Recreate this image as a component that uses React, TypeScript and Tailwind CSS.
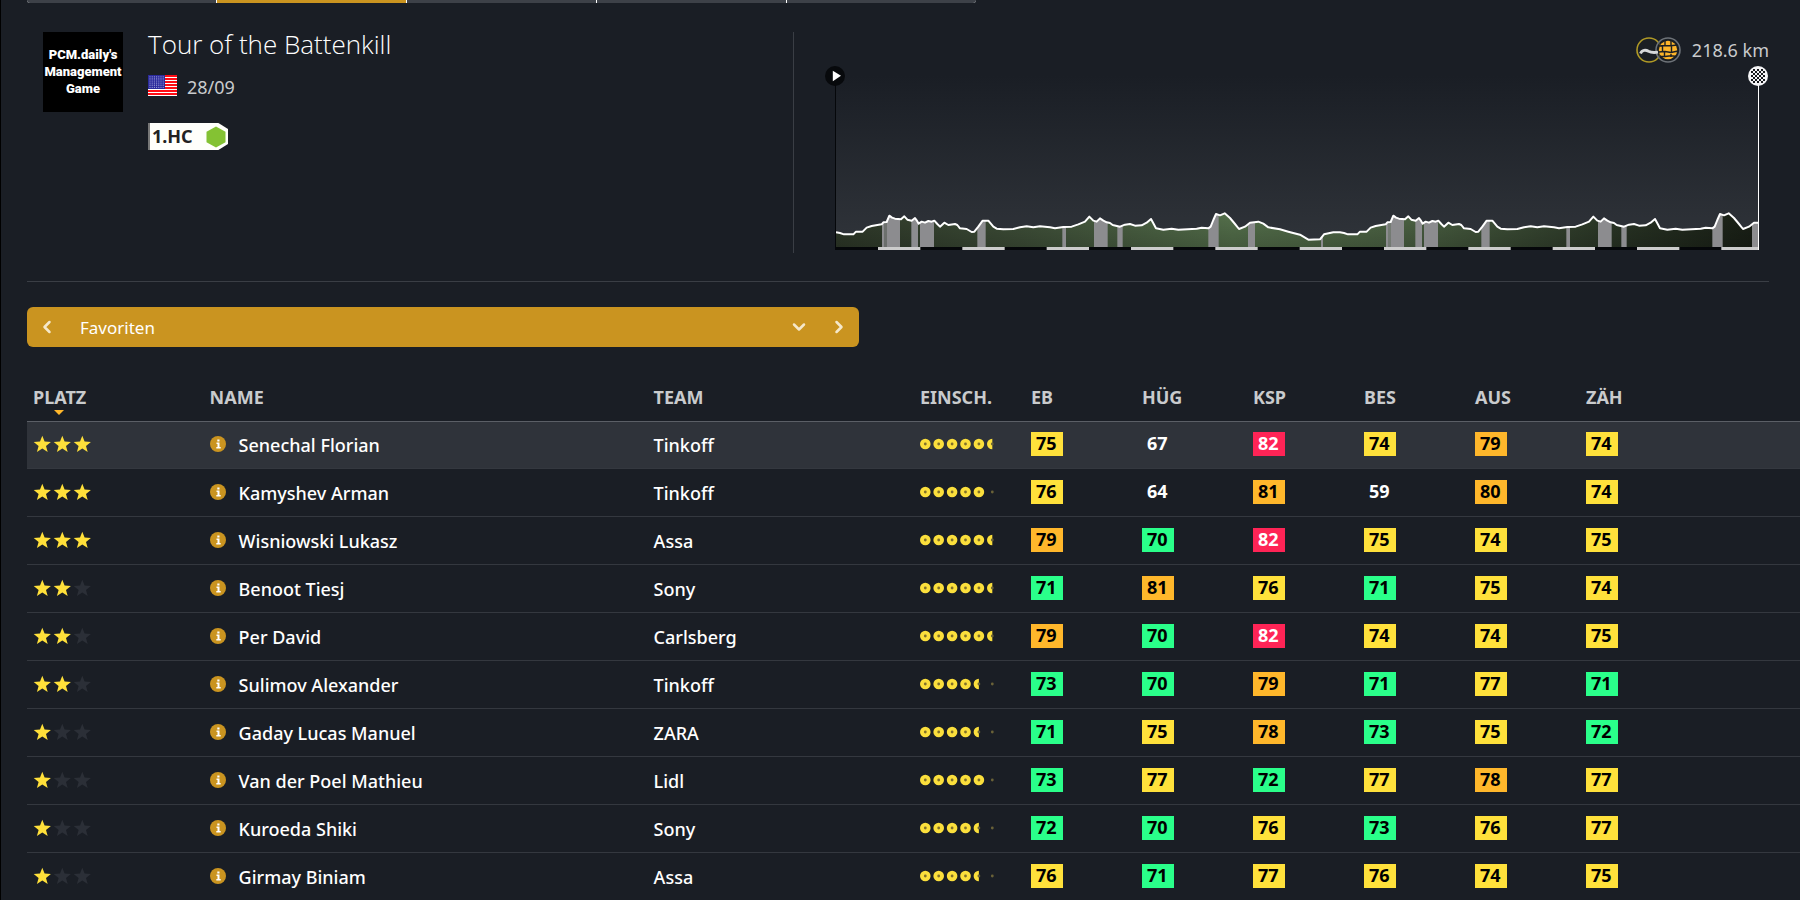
import { useState } from 'react';
import { ChevronDown, ChevronLeft, ChevronRight } from 'lucide-react';

interface Rider {
    stars: number;
    name: string;
    team: string;
    coins: number;
    skills: number[];
}

const riders: Rider[] = [
    { stars: 3, name: 'Senechal Florian', team: 'Tinkoff', coins: 5.5, skills: [75, 67, 82, 74, 79, 74] },
    { stars: 3, name: 'Kamyshev Arman', team: 'Tinkoff', coins: 5, skills: [76, 64, 81, 59, 80, 74] },
    { stars: 3, name: 'Wisniowski Lukasz', team: 'Assa', coins: 5.5, skills: [79, 70, 82, 75, 74, 75] },
    { stars: 2, name: 'Benoot Tiesj', team: 'Sony', coins: 5.5, skills: [71, 81, 76, 71, 75, 74] },
    { stars: 2, name: 'Per David', team: 'Carlsberg', coins: 5.5, skills: [79, 70, 82, 74, 74, 75] },
    { stars: 2, name: 'Sulimov Alexander', team: 'Tinkoff', coins: 4.5, skills: [73, 70, 79, 71, 77, 71] },
    { stars: 1, name: 'Gaday Lucas Manuel', team: 'ZARA', coins: 4.5, skills: [71, 75, 78, 73, 75, 72] },
    { stars: 1, name: 'Van der Poel Mathieu', team: 'Lidl', coins: 5, skills: [73, 77, 72, 77, 78, 77] },
    { stars: 1, name: 'Kuroeda Shiki', team: 'Sony', coins: 4.5, skills: [72, 70, 76, 73, 76, 77] },
    { stars: 1, name: 'Girmay Biniam', team: 'Assa', coins: 4.5, skills: [76, 71, 77, 76, 74, 75] },
];

const skillNames = ['EB', 'HÜG', 'KSP', 'BES', 'AUS', 'ZÄH'];

// Height points of one lap, the lap is ridden almost twice
const LAP = 1512;
const lap: [number, number][] = [
    [3, 469], [15, 471], [27, 475], [55, 475], [63, 467], [83, 467], [95, 455], [110, 450], [140, 445],
    [145, 439], [155, 438], [163, 419], [171, 425], [180, 428], [198, 430], [208, 421], [217, 431], [230, 434],
    [240, 426], [245, 433], [251, 443], [260, 437], [270, 440], [280, 435], [290, 437], [298, 434], [307, 444],
    [315, 452], [328, 440], [340, 447], [360, 444], [367, 447], [375, 457], [395, 459], [410, 468], [418, 467],
    [430, 452], [443, 434], [460, 434], [475, 452], [485, 458], [505, 460], [535, 459], [555, 454], [575, 451],
    [595, 454], [615, 451], [645, 454], [660, 457], [685, 453], [710, 452], [730, 445], [750, 437], [763, 422],
    [775, 434], [785, 437], [795, 427], [805, 434], [815, 439], [825, 441], [833, 447], [855, 452], [870, 446],
    [885, 444], [900, 449], [920, 448], [935, 440], [948, 429], [955, 442], [963, 457], [985, 461], [1010, 458],
    [1030, 461], [1085, 458], [1100, 455], [1120, 457], [1127, 452], [1135, 432], [1143, 414], [1155, 418],
    [1169, 412], [1185, 426], [1200, 444], [1212, 459], [1230, 452], [1245, 440], [1270, 437], [1285, 443],
    [1300, 454], [1335, 460], [1360, 467], [1395, 476], [1420, 491], [1455, 490], [1467, 475], [1495, 469],
];
const points = [...lap, ...lap.map(([x, y]) => [x + LAP, y])].filter(([x]) => x < 2762);
const outline = points.map(([x, y]) => `${x},${y}`).join(' ') + ' 2769,440';

const cobbles: [number, number][] = [
    [141, 8], [151, 4], [156, 39], [229, 20], [255, 42], [427, 25], [682, 11], [777, 41], [847, 16],
    [1120, 31], [1239, 21], [1458, 6],
];
const sectors = [...cobbles, ...cobbles.map(([x, w]) => [x + LAP, w])].filter(([x]) => x < 2760);

function StageProfile() {
    return (
        <svg viewBox="0 0 2772 522" preserveAspectRatio="none" className="block h-[174px] w-full">
            <defs>
                <linearGradient id="sky" x1="0" y1="0" x2="0" y2="1">
                    <stop offset="0" stopColor="#1a1e25" />
                    <stop offset="1" stopColor="#30343a" />
                </linearGradient>
                <linearGradient id="hills" x1="0" y1="0" x2="1" y2="0">
                    <stop offset="0" stopColor="#2d3728" />
                    <stop offset="0.2" stopColor="#3d4d37" />
                    <stop offset="0.43" stopColor="#536e4a" />
                    <stop offset="0.62" stopColor="#4a6042" />
                    <stop offset="0.85" stopColor="#283324" />
                    <stop offset="1" stopColor="#181e15" />
                </linearGradient>
                <linearGradient id="shade" x1="0" y1="0" x2="0" y2="1">
                    <stop offset="0.8" stopColor="#000000" stopOpacity="0" />
                    <stop offset="1" stopColor="#000000" stopOpacity="0.2" />
                </linearGradient>
                <clipPath id="ground">
                    <polygon points={`3,513 ${outline} 2769,513`} />
                </clipPath>
            </defs>
            <rect width="2772" height="522" fill="url(#sky)" />
            <g clipPath="url(#ground)">
                <rect width="2772" height="522" fill="url(#hills)" />
                <rect width="2772" height="522" fill="url(#shade)" />
                {sectors.map(([x, w]) => (
                    <rect key={x} x={x} y="380" width={w} height="140" fill="#8c8c8f" />
                ))}
            </g>
            <polyline points={outline} fill="none" stroke="#ffffff" strokeWidth="6" strokeLinejoin="round" />
            <rect y="513" width="2772" height="9" fill="#05070a" />
            {Array.from({ length: 11 }, (_, i) => (
                <rect key={i} x={129 + i * 253} y="513" width="127" height="9" fill="#cccccc" />
            ))}
            <rect width="3" height="522" fill="#05070a" />
            <rect x="2769" width="3" height="522" fill="#ffffff" />
        </svg>
    );
}

function Flag() {
    return (
        <svg viewBox="0 0 29 21" className="h-[21px] w-[29px]" role="img" aria-label="USA">
            <rect width="29" height="21" fill="#ffffff" />
            {[0, 3, 6, 9, 12, 15, 18].map((y) => (
                <rect key={y} y={y} width="29" height="2" fill="#ff0c14" />
            ))}
            <rect width="17" height="14" fill="#2a2a9c" />
            {[0, 1, 2, 3, 4, 5].map((row) =>
                [0, 1, 2, 3, 4, 5, 6].map((col) => (
                    <circle key={`${row}-${col}`} cx={2 + col * 2.2} cy={1.8 + row * 2.1} r="0.6" fill="#a9a9dd" />
                ))
            )}
        </svg>
    );
}

function TerrainIcons() {
    return (
        <svg viewBox="0 0 46 26" className="h-[26px] w-[46px]" aria-hidden="true">
            <circle cx="13" cy="13" r="12" fill="#1b1f24" stroke="#b09a26" strokeWidth="1.6" />
            <circle cx="32" cy="13" r="12" fill="#1b1f24" fillOpacity="0.7" stroke="#6d7278" strokeWidth="1.6" />
            <path d="M4.5 16.5C6 12.5 10 12.8 12.5 14.3 15.5 16 18 15.8 22 15.2" fill="none" stroke="#d6d8da" strokeWidth="2.8" />
            <circle cx="32" cy="13" r="9.2" fill="#fdb52a" />
            <path
                d="M29 3v5.5M35 3v5M23 9l6-.5 6 .3 6-.8M22.5 15l6.5-.5 6 1 7-1.5M28.5 14.5v5M35.5 8.500v6.500M35 17v3M24 19.500h5l6-.8 6 .8M26.500 9v5.500"
                fill="none"
                stroke="#1b1f24"
                strokeWidth="1.4"
            />
        </svg>
    );
}

function StartIcon() {
    return (
        <svg viewBox="0 0 20 20" className="size-5" aria-hidden="true">
            <circle cx="10" cy="10" r="10" fill="#07090c" />
            <path d="M7.8 4.8l8.2 5-8.2 5.4z" fill="#ffffff" />
        </svg>
    );
}

function FinishIcon() {
    return (
        <svg viewBox="0 0 20 20" className="size-5" aria-hidden="true">
            <circle cx="10" cy="10" r="10" fill="#f4f4f6" />
            {[0, 1, 2, 3, 4, 5, 6].map((row) =>
                [0, 1, 2, 3, 4, 5, 6].map((col) =>
                    (row + col) % 2 === 1 && Math.hypot(row - 3, col - 3) < 3.7 ? (
                        <rect key={`${row}-${col}`} x={3 + col * 2} y={3 + row * 2} width="2" height="2" fill="#17191d" />
                    ) : null
                )
            )}
        </svg>
    );
}

function Stars({ count }: { count: number }) {
    return (
        <svg viewBox="0 0 59 18" className="block h-[18px] w-[59px]" role="img" aria-label={`${count} / 3`}>
            {[0, 1, 2].map((i) => (
                <path
                    key={i}
                    transform={`translate(${i * 20 + 1} 0)`}
                    d="M9.3.8l2.3 5.800 6.300.3-4.900 4 1.700 6.200-5.400-3.500-5.400 3.500 1.700-6.200-4.900-4 6.300-.3z"
                    fill={i < count ? '#ffe03a' : '#2b2f37'}
                />
            ))}
        </svg>
    );
}

function Coins({ count }: { count: number }) {
    return (
        <svg viewBox="0 0 76 12" className="block h-3 w-[76px]" role="img" aria-label={`${count} / 6`}>
            {[0, 1, 2, 3, 4, 5].map((i) => {
                const cx = 5.3 + i * 13.4;
                const full = count >= i + 1;
                return (
                    <g key={i}>
                        {full && <circle cx={cx} cy="6" r="5.3" fill="#fbdf3c" />}
                        {!full && count > i && <path d={`M${cx} 0.7a5.3 5.3 0 0 0 0 10.6z`} fill="#fbdf3c" />}
                        <circle cx={cx} cy="6" r="1.4" fill={full ? '#80702a' : '#6a6238'} />
                    </g>
                );
            })}
        </svg>
    );
}

function InfoIcon() {
    return (
        <svg viewBox="0 0 16 16" className="block size-4" aria-hidden="true">
            <circle cx="8" cy="8" r="8" fill="#ca9420" />
            <path d="M7.300 3.600h2.200v2h-2.200zM6.500 6.600h3v4.400h1.200v1.500H6.300V11h1.200V8.100h-1z" fill="#ffffff" />
        </svg>
    );
}

function skillColor(value: number) {
    if (value >= 82) return 'bg-[#ff2456] text-white';
    if (value >= 78) return 'bg-[#ffb72b] text-black';
    if (value >= 74) return 'bg-[#ffe13b] text-black';
    if (value >= 70) return 'bg-[#2aff8a] text-black';
    return 'text-white';
}

function RaceHeader() {
    return (
        <header className="mr-[31px] flex border-b border-[#3a3e45] pt-[29px] pb-[28px]">
            <div className="flex h-[221px] w-[767px] shrink-0 border-r border-[#3a3e45] pl-[16px]">
                <div className="flex size-20 flex-col items-center justify-center bg-black pb-[2px] font-[Roboto,sans-serif] text-[13px] leading-[17px] font-black text-white">
                    <span>PCM.daily's</span>
                    <span>Management</span>
                    <span>Game</span>
                </div>
                <div className="pl-[25px]">
                    <h1 className="font-['Open_Sans',sans-serif] text-[26px] leading-6 font-light text-white">Tour of the Battenkill</h1>
                    <div className="mt-[17px] flex h-6 items-center gap-[10px]">
                        <Flag />
                        <span className="pt-[5px] text-[18px] text-[#c9cbcd]">28/09</span>
                    </div>
                    <div className="mt-[26px] flex h-[27px] w-20 items-center justify-between border-l-2 border-[#777777] bg-[#fffffb] pr-[2px] pl-[2px] [clip-path:polygon(0_0,88%_0,100%_22%,100%_78%,88%_100%,0_100%)]">
                        <span className="text-[18px] font-bold text-[#222222]">1.HC</span>
                        <svg viewBox="0 0 20 22" className="h-[22px] w-5" aria-hidden="true">
                            <path d="M10 .5l9.500 5.300v10.400L10 21.500.500 16.200V5.800z" fill="#84c233" />
                        </svg>
                    </div>
                </div>
            </div>
            <div className="min-w-0 flex-1 pl-[31px]">
                <div className="flex h-[36px] items-center justify-end gap-[10px]">
                    <TerrainIcons />
                    <span className="text-[18px] text-[#c9cbcd]">218.6 km</span>
                </div>
                <div className="relative z-10 -mt-[2px] flex justify-between pr-px">
                    <StartIcon />
                    <FinishIcon />
                </div>
                <div className="-mt-[10px] pr-[10px] pl-[10px]">
                    <StageProfile />
                </div>
            </div>
        </header>
    );
}

function ViewPicker() {
    const [view, setView] = useState('Favoriten');

    return (
        <div className="mt-[25px] flex h-10 w-[832px] items-center rounded-md bg-[#ca9420] text-[#f5e8cb]">
            <button type="button" aria-label="Zurück" className="flex h-10 w-10 items-center justify-center">
                <ChevronLeft size={20} strokeWidth={3} />
            </button>
            <div className="relative flex-1">
                <select
                    aria-label="Ansicht"
                    value={view}
                    onChange={(e) => setView(e.target.value)}
                    className="block h-10 w-full appearance-none pt-[2px] pl-[13px] text-[17px] text-white focus:outline-none"
                >
                    <option>Favoriten</option>
                </select>
                <ChevronDown size={20} strokeWidth={3} className="pointer-events-none absolute top-[10px] right-[10px]" />
            </div>
            <button type="button" aria-label="Weiter" className="flex h-10 w-10 items-center justify-center">
                <ChevronRight size={20} strokeWidth={3} />
            </button>
        </div>
    );
}

function RiderTable() {
    return (
        <div className="mt-[25px] -mr-[3px]">
            <table className="w-full table-fixed border-separate border-spacing-0 text-left text-[18px]">
                <colgroup>
                    <col className="w-[10%]" />
                    <col className="w-[25%]" />
                    <col className="w-[15%]" />
                    <col span={8} className="w-[6.25%]" />
                </colgroup>
                <thead>
                    <tr className="h-[50px] text-[#c9cbcd] [&>th]:border-b [&>th]:border-[#5b5f66] [&>th]:px-[5px] [&>th]:pt-[2px] [&>th]:font-bold">
                        <th>
                            <span className="relative ml-px">
                                PLATZ
                                <svg viewBox="0 0 10 5" className="absolute top-[25px] left-[21px] h-[5px] w-[10px]" aria-hidden="true">
                                    <path d="M0 0h10L5 5z" fill="#ffb72b" />
                                </svg>
                            </span>
                        </th>
                        <th>NAME</th>
                        <th>TEAM</th>
                        <th>EINSCH.</th>
                        {skillNames.map((skill) => (
                            <th key={skill}>{skill}</th>
                        ))}
                        <th aria-label="Mehr" />
                    </tr>
                </thead>
                <tbody>
                    {riders.map((rider) => (
                        <tr
                            key={rider.name}
                            className="h-12 text-white first:h-[47px] first:bg-[#2f333a] [&>td]:border-b [&>td]:border-[#34383f] [&>td]:px-[5px] last:[&>td]:border-b-0"
                        >
                            <td className="pb-[2px]">
                                <Stars count={rider.stars} />
                            </td>
                            <td className="pt-px">
                                <a href="#" className="flex items-center gap-[13px] font-medium">
                                    <span className="pb-[3px]">
                                        <InfoIcon />
                                    </span>
                                    <span>{rider.name}</span>
                                </a>
                            </td>
                            <td className="pt-px font-medium">{rider.team}</td>
                            <td className="pb-[2px]">
                                <Coins count={rider.coins} />
                            </td>
                            {rider.skills.map((value, i) => (
                                <td key={i} className="pb-[2px]">
                                    <span className={`block h-6 w-8 pl-[5px] leading-[22px] font-bold ${skillColor(value)}`}>{value}</span>
                                </td>
                            ))}
                            <td />
                        </tr>
                    ))}
                </tbody>
            </table>
        </div>
    );
}

export default function App() {
    return (
        <div className="min-h-screen overflow-hidden border-l border-black bg-[#1a1e25] pl-[26px] font-['Noto_Sans','Open_Sans',sans-serif]">
            <nav className="flex h-[3px] w-[949px] gap-px overflow-hidden rounded-b-md bg-white">
                <span className="flex-1 bg-[#3d4148]" />
                <span className="flex-1 bg-[#ca9420]" />
                <span className="flex-1 bg-[#3d4148]" />
                <span className="flex-1 bg-[#3d4148]" />
                <span className="flex-1 bg-[#3d4148]" />
            </nav>
            <RaceHeader />
            <ViewPicker />
            <RiderTable />
        </div>
    );
}
